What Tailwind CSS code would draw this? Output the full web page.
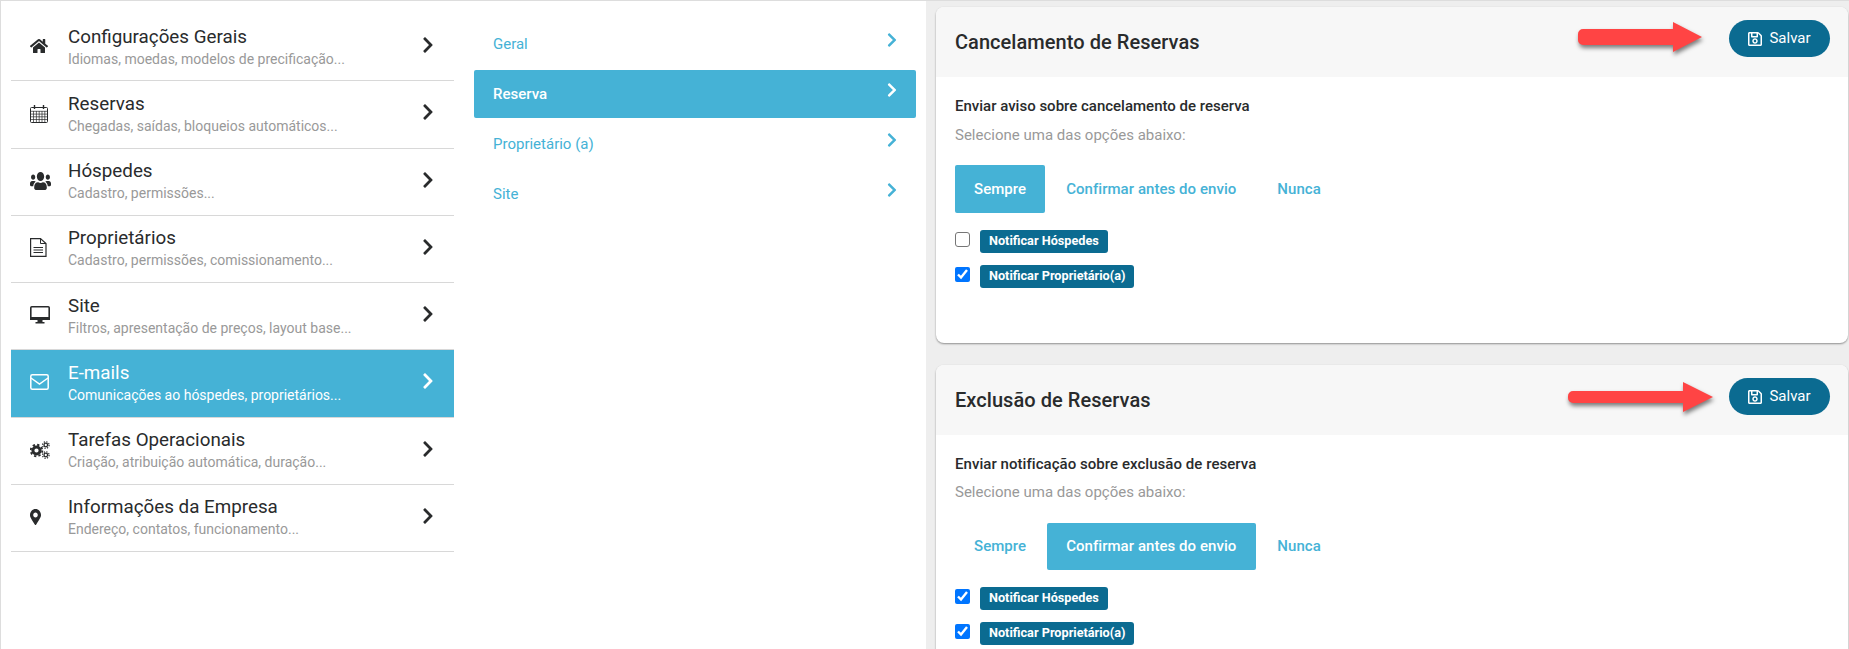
<!DOCTYPE html>
<html lang="pt-BR">
<head>
  <meta charset="UTF-8" />
  <title>Configurações de E-mails</title>
  <script src="https://cdn.jsdelivr.net/npm/@tailwindcss/browser@4"></script>
</head>
<body class="h-screen overflow-hidden bg-white font-['Roboto',sans-serif] text-[#292b2c]">
<div class="flex h-[649px] overflow-hidden border-t border-l border-[#ddd]">

  <!-- Menu principal -->
  <div id="mainMenu" class="w-[462px] shrink-0 pl-[10px] pr-[9px] pt-[13px]"></div>

  <!-- Submenu -->
  <div class="w-[463px] shrink-0 pl-[11px] pr-[10px] pt-[19px] text-[#45b2d6] text-[15px]">
    <a class="flex justify-between h-[48px] mb-[2px] pl-[19px] pr-[19px] pt-[13px] rounded-[2px]"><span>Geral</span><svg class="w-[10px] h-[16px] -mt-[1px] fill-current" viewBox="0 0 320 512"><path d="M285.476 272.971L91.132 467.314c-9.373 9.373-24.569 9.373-33.941 0l-22.667-22.667c-9.357-9.357-9.375-24.522-.04-33.901L188.505 256 34.484 101.255c-9.335-9.379-9.317-24.544.04-33.901l22.667-22.667c9.373-9.373 24.569-9.373 33.941 0L285.475 239.03c9.373 9.372 9.373 24.568.001 33.941z"/></svg></a>
    <a class="flex justify-between h-[48px] mb-[2px] pl-[19px] pr-[19px] pt-[13px] rounded-[2px] bg-[#45b2d6] text-white font-medium"><span>Reserva</span><svg class="w-[10px] h-[16px] -mt-[1px] fill-current" viewBox="0 0 320 512"><path d="M285.476 272.971L91.132 467.314c-9.373 9.373-24.569 9.373-33.941 0l-22.667-22.667c-9.357-9.357-9.375-24.522-.04-33.901L188.505 256 34.484 101.255c-9.335-9.379-9.317-24.544.04-33.901l22.667-22.667c9.373-9.373 24.569-9.373 33.941 0L285.475 239.03c9.373 9.372 9.373 24.568.001 33.941z"/></svg></a>
    <a class="flex justify-between h-[48px] mb-[2px] pl-[19px] pr-[19px] pt-[13px] rounded-[2px]"><span>Proprietário (a)</span><svg class="w-[10px] h-[16px] -mt-[1px] fill-current" viewBox="0 0 320 512"><path d="M285.476 272.971L91.132 467.314c-9.373 9.373-24.569 9.373-33.941 0l-22.667-22.667c-9.357-9.357-9.375-24.522-.04-33.901L188.505 256 34.484 101.255c-9.335-9.379-9.317-24.544.04-33.901l22.667-22.667c9.373-9.373 24.569-9.373 33.941 0L285.475 239.03c9.373 9.372 9.373 24.568.001 33.941z"/></svg></a>
    <a class="flex justify-between h-[48px] mb-[2px] pl-[19px] pr-[19px] pt-[13px] rounded-[2px]"><span>Site</span><svg class="w-[10px] h-[16px] -mt-[1px] fill-current" viewBox="0 0 320 512"><path d="M285.476 272.971L91.132 467.314c-9.373 9.373-24.569 9.373-33.941 0l-22.667-22.667c-9.357-9.357-9.375-24.522-.04-33.901L188.505 256 34.484 101.255c-9.335-9.379-9.317-24.544.04-33.901l22.667-22.667c9.373-9.373 24.569-9.373 33.941 0L285.475 239.03c9.373 9.372 9.373 24.568.001 33.941z"/></svg></a>
  </div>

  <!-- Conteudo -->
  <div class="flex-1 min-w-0 bg-[#eeeeee] pl-[10px] pr-[1px] pt-[6px] flex flex-col gap-[22px]">

    <section class="relative h-[336px] shrink-0 bg-white rounded-[8px] shadow-[0_1px_2px_rgba(0,0,0,0.4)]">
      <header class="flex items-center justify-between h-[70px] pl-[19px] pr-[18px] bg-[#f7f7f7] rounded-t-[8px]">
        <h2 class="text-[20px] font-medium tracking-[0.05px]">Cancelamento de Reservas</h2>
        <button class="flex items-center justify-center gap-[7px] w-[101px] h-[37px] mb-[7px] rounded-full bg-[#0b6b91] text-white text-[15px]">
          <svg class="w-[14px] h-[16px] fill-current" viewBox="0 0 448 512"><path d="M433.941 129.941l-83.882-83.882A48 48 0 0 0 316.118 32H48C21.49 32 0 53.49 0 80v352c0 26.51 21.49 48 48 48h352c26.51 0 48-21.49 48-48V163.882a48 48 0 0 0-14.059-33.941zM272 80v80H144V80h128zm122 352H54a6 6 0 0 1-6-6V86a6 6 0 0 1 6-6h42v104c0 13.255 10.745 24 24 24h176c13.255 0 24-10.745 24-24V83.882l78.243 78.243a6 6 0 0 1 1.757 4.243V426a6 6 0 0 1-6 6zM224 232c-48.523 0-88 39.477-88 88s39.477 88 88 88 88-39.477 88-88-39.477-88-88-88zm0 128c-22.056 0-40-17.944-40-40s17.944-40 40-40 40 17.944 40 40-17.944 40-40 40z"/></svg>
          Salvar
        </button>
      </header>
      <div class="pl-[19px] pt-[20px]">
        <p class="text-[15px] font-medium leading-[18px]">Enviar aviso sobre cancelamento de reserva</p>
        <p class="mt-[10px] text-[15px] leading-[20px] text-[#999]">Selecione uma das opções abaixo:</p>
        <div class="flex gap-[2px] mt-[20px] text-[15px] font-medium tracking-[0.05px] text-[#45b2d6]">
          <a class="flex items-center h-[48px] px-[19px] rounded-[2px] bg-[#45b2d6] text-white">Sempre</a>
          <a class="flex items-center h-[48px] pl-[19px] pr-[20px] rounded-[2px]">Confirmar antes do envio</a>
          <a class="flex items-center h-[48px] px-[19px] rounded-[2px]">Nunca</a>
        </div>
        <div class="flex flex-col gap-[12px] mt-[17px]">
          <label class="flex items-start gap-[10px]">
            <input type="checkbox" class="w-[15px] h-[15px] mt-[2px] rounded-[3px] appearance-none bg-white border border-[#767676]" />
            <span class="h-[23px] px-[9px] rounded-[3px] bg-[#0b6b91] text-white text-[12.7px] font-bold leading-[21px]">Notificar Hóspedes</span>
          </label>
          <label class="flex items-start gap-[10px]">
            <input type="checkbox" checked class="w-[15px] h-[15px] mt-[2px] accent-[#0075ff]" />
            <span class="h-[23px] px-[9px] rounded-[3px] bg-[#0b6b91] text-white text-[12.7px] font-bold leading-[21px]">Notificar Proprietário(a)</span>
          </label>
        </div>
      </div>
      <!-- seta -->
      <svg class="absolute left-[640px] top-[12px] w-[126px] h-[38px] overflow-visible drop-shadow-[1px_3px_2px_rgba(0,0,0,0.5)]" viewBox="0 0 126 38"><path fill="#ff4444" d="M5 10H95V3L124 18 95 33V26H5a5 5 0 0 1-5-5v-6a5 5 0 0 1 5-5z" transform="translate(2,0)"/></svg>
    </section>

    <section class="relative h-[336px] shrink-0 bg-white rounded-[8px] shadow-[0_1px_2px_rgba(0,0,0,0.4)]">
      <header class="flex items-center justify-between h-[70px] pl-[19px] pr-[18px] bg-[#f7f7f7] rounded-t-[8px]">
        <h2 class="text-[20px] font-medium tracking-[0.05px] mb-[1px]">Exclusão de Reservas</h2>
        <button class="flex items-center justify-center gap-[7px] w-[101px] h-[37px] mb-[7px] rounded-full bg-[#0b6b91] text-white text-[15px]">
          <svg class="w-[14px] h-[16px] fill-current" viewBox="0 0 448 512"><path d="M433.941 129.941l-83.882-83.882A48 48 0 0 0 316.118 32H48C21.49 32 0 53.49 0 80v352c0 26.51 21.49 48 48 48h352c26.51 0 48-21.49 48-48V163.882a48 48 0 0 0-14.059-33.941zM272 80v80H144V80h128zm122 352H54a6 6 0 0 1-6-6V86a6 6 0 0 1 6-6h42v104c0 13.255 10.745 24 24 24h176c13.255 0 24-10.745 24-24V83.882l78.243 78.243a6 6 0 0 1 1.757 4.243V426a6 6 0 0 1-6 6zM224 232c-48.523 0-88 39.477-88 88s39.477 88 88 88 88-39.477 88-88-39.477-88-88-88zm0 128c-22.056 0-40-17.944-40-40s17.944-40 40-40 40 17.944 40 40-17.944 40-40 40z"/></svg>
          Salvar
        </button>
      </header>
      <div class="pl-[19px] pt-[20px]">
        <p class="text-[15px] font-medium leading-[18px] tracking-[0.05px]">Enviar notificação sobre exclusão de reserva</p>
        <p class="mt-[9px] text-[15px] leading-[20px] text-[#999]">Selecione uma das opções abaixo:</p>
        <div class="flex gap-[2px] mt-[21px] text-[15px] font-medium tracking-[0.05px] text-[#45b2d6]">
          <a class="flex items-center h-[47px] px-[19px] rounded-[2px]">Sempre</a>
          <a class="flex items-center h-[47px] pl-[19px] pr-[20px] rounded-[2px] bg-[#45b2d6] text-white">Confirmar antes do envio</a>
          <a class="flex items-center h-[47px] px-[19px] rounded-[2px]">Nunca</a>
        </div>
        <div class="flex flex-col gap-[12px] mt-[17px]">
          <label class="flex items-start gap-[10px]">
            <input type="checkbox" checked class="w-[15px] h-[15px] mt-[2px] accent-[#0075ff]" />
            <span class="h-[23px] px-[9px] rounded-[3px] bg-[#0b6b91] text-white text-[12.7px] font-bold leading-[21px]">Notificar Hóspedes</span>
          </label>
          <label class="flex items-start gap-[10px]">
            <input type="checkbox" checked class="w-[15px] h-[15px] mt-[2px] accent-[#0075ff]" />
            <span class="h-[23px] px-[9px] rounded-[3px] bg-[#0b6b91] text-white text-[12.7px] font-bold leading-[21px]">Notificar Proprietário(a)</span>
          </label>
        </div>
      </div>
      <!-- seta -->
      <svg class="absolute left-[631px] top-[15px] w-[146px] h-[38px] overflow-visible drop-shadow-[1px_3px_2px_rgba(0,0,0,0.5)]" viewBox="0 0 146 38"><path fill="#ff4444" d="M5 11H115V2L145 17 115 32V23H5a5 5 0 0 1-5-5v-2a5 5 0 0 1 5-5z" transform="translate(1,0)"/></svg>
    </section>
  </div>
</div>

<script>
  const chevron = '<svg class="w-[12px] h-[18px] mb-[4px] fill-current" viewBox="0 0 320 512"><path d="M285.476 272.971L91.132 467.314c-9.373 9.373-24.569 9.373-33.941 0l-22.667-22.667c-9.357-9.357-9.375-24.522-.04-33.901L188.505 256 34.484 101.255c-9.335-9.379-9.317-24.544.04-33.901l22.667-22.667c9.373-9.373 24.569-9.373 33.941 0L285.475 239.03c9.373 9.372 9.373 24.568.001 33.941z"/></svg>';

  const icons = {
    home: '<svg class="w-[18px] h-[16px] fill-current" viewBox="0 0 576 512"><path d="M280.37 148.26L96 300.11V464a16 16 0 0 0 16 16l112.06-.29a16 16 0 0 0 15.92-16V368a16 16 0 0 1 16-16h64a16 16 0 0 1 16 16v95.64a16 16 0 0 0 16 16.05L464 480a16 16 0 0 0 16-16V300L295.67 148.26a12.19 12.19 0 0 0-15.3 0zM571.6 251.47L488 182.56V44.05a12 12 0 0 0-12-12h-56a12 12 0 0 0-12 12v72.61L318.47 43a48 48 0 0 0-61 0L4.34 251.47a12 12 0 0 0-1.6 16.9l25.5 31A12 12 0 0 0 45.15 301l235.22-193.74a12.19 12.19 0 0 1 15.3 0L530.9 301a12 12 0 0 0 16.9-1.6l25.5-31a12 12 0 0 0-1.7-16.93z"/></svg>',
    calendar: '<svg class="w-[18px] h-[19px]" viewBox="0 0 18 19" fill="none" stroke="currentColor"><rect x="0.5" y="3.5" width="17" height="15" rx="1"/><path stroke-width="0.7" d="M0.5 7.300h17M0.5 10.100h17M0.5 12.800h17M0.500 15.500h17M3.500 7v11M6.400 7v11M9.200 7v11M12 7v11M14.800 7v11"/><path stroke-width="1.400" d="M4.500 1v4M13.500 1v4"/></svg>',
    users: '<svg class="w-[21px] h-[18px] fill-current" viewBox="0 32 640 448" preserveAspectRatio="none"><path d="M96 224c35.3 0 64-28.7 64-64s-28.7-64-64-64-64 28.7-64 64 28.7 64 64 64zm448 0c35.3 0 64-28.7 64-64s-28.7-64-64-64-64 28.7-64 64 28.7 64 64 64zm32 32h-64c-17.6 0-33.5 7.1-45.1 18.6 40.3 22.1 68.9 62 75.1 109.4h66c17.7 0 32-14.3 32-32v-32c0-35.3-28.7-64-64-64zm-256 0c61.9 0 112-50.1 112-112S381.9 32 320 32 208 82.1 208 144s50.1 112 112 112zm76.8 32h-8.3c-20.8 10-43.9 16-68.5 16s-47.6-6-68.5-16h-8.3C179.6 288 128 339.6 128 403.2V432c0 26.5 21.5 48 48 48h288c26.5 0 48-21.5 48-48v-28.8c0-63.6-51.6-115.2-115.2-115.2zm-223.7-13.4C161.5 263.1 145.6 256 128 256H64c-35.3 0-64 28.7-64 64v32c0 17.7 14.3 32 32 32h65.9c6.3-47.4 34.9-87.3 75.2-109.4z"/></svg>',
    file: '<svg class="w-[17px] h-[19px]" viewBox="0 0 17 19" fill="none" stroke="currentColor"><path stroke-width="1.200" d="M0.600 0.600H10.500L16 5.500V18.400H0.600z"/><path d="M10.500 0.600V5.500H16M3.500 9.500h9.500M3.500 12h9.500M3.500 14.500h9.500"/></svg>',
    desktop: '<svg class="w-[20px] h-[18px]" viewBox="0 0 20 18" fill="none"><rect x="0.800" y="0.800" width="18.400" height="12.400" rx="1" stroke="currentColor" stroke-width="1.600"/><path fill="currentColor" d="M0 11h20v3H0zM7.500 14h5v2h2v1.500H5.500V16h2z"/></svg>',
    mail: '<svg class="w-[19px] h-[16px]" viewBox="0 0 19 16" fill="none" stroke="currentColor" stroke-width="1.500"><rect x="0.800" y="0.800" width="17.400" height="14.400" rx="1.500"/><path d="M1 4l8.500 6L18 4"/></svg>',
    cogs: '<svg class="w-[20px] h-[18px]" viewBox="0 0 20 18" fill="none" stroke="currentColor"><circle cx="6.500" cy="9.500" r="3.600" stroke-width="3"/><circle cx="6.500" cy="9.500" r="5.800" stroke-width="1.800" stroke-dasharray="2.300 2.250"/><circle cx="15.800" cy="4" r="1.800" stroke-width="1.300"/><circle cx="15.800" cy="4" r="3.300" stroke-width="1.200" stroke-dasharray="1.300 1.300"/><circle cx="15.800" cy="14" r="1.800" stroke-width="1.300"/><circle cx="15.800" cy="14" r="3.300" stroke-width="1.200" stroke-dasharray="1.300 1.300"/></svg>',
    pin: '<svg class="w-[11px] h-[16px] fill-current" viewBox="0 0 384 512" preserveAspectRatio="none"><path d="M172.268 501.670C26.970 291.031 0 253.413 0 192 0 85.961 85.961 0 192 0s192 85.961 192 192c0 61.413-26.970 99.031-172.268 309.670-9.535 13.774-29.930 13.773-39.464 0zM192 272c44.183 0 80-35.817 80-80s-35.817-80-80-80-80 35.817-80 80 35.817 80 80 80z"/></svg>'
  };

  const menu = [
    { icon: 'home', title: 'Configurações Gerais', sub: 'Idiomas, moedas, modelos de precificação...' },
    { icon: 'calendar', title: 'Reservas', sub: 'Chegadas, saídas, bloqueios automáticos...' },
    { icon: 'users', title: 'Hóspedes', sub: 'Cadastro, permissões...' },
    { icon: 'file', title: 'Proprietários', sub: 'Cadastro, permissões, comissionamento...' },
    { icon: 'desktop', title: 'Site', sub: 'Filtros, apresentação de preços, layout base...' },
    { icon: 'mail', title: 'E-mails', sub: 'Comunicações ao hóspedes, proprietários...', active: true },
    { icon: 'cogs', title: 'Tarefas Operacionais', sub: 'Criação, atribuição automática, duração...' },
    { icon: 'pin', title: 'Informações da Empresa', sub: 'Endereço, contatos, funcionamento...' }
  ];

  function createItem(item) {
    const rowClass = item.active
      ? 'bg-[#45b2d6] text-white border-[#d8d8d8]'
      : 'border-[#d8d8d8] text-[#292b2c]';
    const subClass = item.active ? 'text-white' : 'text-[#999]';
    return `
      <a class="flex items-center h-[67.25px] border-b pl-[19px] pr-[20px] ${rowClass}">
        <span class="w-[38px] shrink-0 flex items-center mb-[2px]">${icons[item.icon]}</span>
        <span class="flex-1 min-w-0">
          <span class="block text-[18.8px] leading-[22px]">${item.title}</span>
          <span class="block mt-[1px] text-[14px] leading-[20px] ${subClass}">${item.sub}</span>
        </span>
        ${chevron}
      </a>`;
  }

  document.getElementById('mainMenu').innerHTML = menu.map(createItem).join('');
</script>
</body>
</html>
